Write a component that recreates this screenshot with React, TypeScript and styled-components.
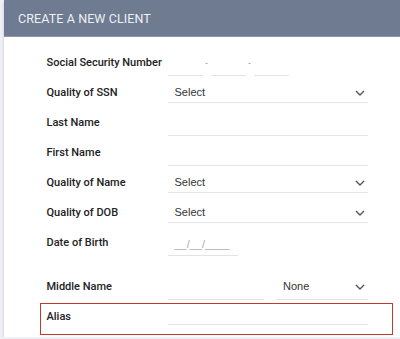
import React from 'react';
import styled, { createGlobalStyle } from 'styled-components';

const GlobalStyle = createGlobalStyle`
  html, body {
    margin: 0;
    padding: 0;
    background: #eef0f6;
    font-family: Roboto, "Liberation Sans", Arial, sans-serif;
    overflow: hidden;
  }
  * { box-sizing: border-box; }
`;

type Row = {
  label: string;
  kind: 'ssn' | 'select' | 'text' | 'date' | 'middle';
  value?: string;
};

const rows: Row[] = [
  { label: 'Social Security Number', kind: 'ssn' },
  { label: 'Quality of SSN', kind: 'select', value: 'Select' },
  { label: 'Last Name', kind: 'text' },
  { label: 'First Name', kind: 'text' },
  { label: 'Quality of Name', kind: 'select', value: 'Select' },
  { label: 'Quality of DOB', kind: 'select', value: 'Select' },
  { label: 'Date of Birth', kind: 'date' },
];

const Chevron = () => (
  <svg width="10" height="6" viewBox="0 0 10 6">
    <path d="M1 1 L5 5 L9 1" fill="none" stroke="#555" strokeWidth="1.4" />
  </svg>
);

const SelectBox = ({ value, width }: { value: string; width?: number }) => (
  <SelectField fixedWidth={width}>
    <span>{value}</span>
    <Chevron />
  </SelectField>
);

const renderField = (row: Row) => {
  switch (row.kind) {
    case 'ssn':
      return (
        <SsnGroup>
          <Line width={35} />
          <Dash>-</Dash>
          <Line width={35} />
          <Dash>-</Dash>
          <Line width={35} />
        </SsnGroup>
      );
    case 'select':
      return <SelectBox value={row.value || ''} />;
    case 'date':
      return <DateField>__/__/____</DateField>;
    case 'middle':
      return (
        <MiddleGroup>
          <Line width={96} />
          <SelectBox value="None" width={92} />
        </MiddleGroup>
      );
    default:
      return <TextField />;
  }
};

const App = () => {
  return (
    <>
      <GlobalStyle />
      <Card>
        <Header>CREATE A NEW CLIENT</Header>
        <Form>
          {rows.map((row) => (
            <FormRow key={row.label}>
              <Label>{row.label}</Label>
              {renderField(row)}
            </FormRow>
          ))}
          <Spacer />
          <FormRow>
            <Label>Middle Name</Label>
            {renderField({ label: 'Middle Name', kind: 'middle' })}
          </FormRow>
          <FormRow highlighted>
            <Label>Alias</Label>
            <AliasField />
          </FormRow>
        </Form>
      </Card>
    </>
  );
};

export default App;

const Card = styled.div`
  margin-left: 4px;
  height: 337px;
  background: #fff;
  box-shadow: 0 2px 3px rgba(0, 0, 0, 0.18);
`;

const Header = styled.div`
  height: 37px;
  background: #6f7b91;
  border-bottom: 1px solid #8e98aa;
  color: #eef0f4;
  font-size: 12.5px;
  letter-spacing: 0.1px;
  display: flex;
  align-items: center;
  padding-left: 14px;
`;

const Form = styled.div`
  padding: 10px 7px 0 36px;
  display: flex;
  flex-direction: column;
`;

const FormRow = styled.div<{ highlighted?: boolean }>`
  display: flex;
  align-items: center;
  height: 30px;
  padding: 0 24px 0 5.5px;
  border: 1.5px solid ${(p) => (p.highlighted ? '#c8372d' : 'transparent')};
  ${(p) =>
    p.highlighted ? 'height: 32px; margin-top: 2px; padding-bottom: 5px;' : ''}
`;

const Spacer = styled.div`
  height: 14px;
`;

const Label = styled.div`
  width: 121px;
  flex-shrink: 0;
  font-size: 11px;
  font-weight: 500;
  color: #222;
`;

const TextField = styled.div`
  flex: 1;
  height: 20px;
  margin-top: 8px;
  border-bottom: 1px solid #e4e4e4;
`;

const AliasField = styled(TextField)`
  height: 16px;
  margin-top: 0;
`;

const SsnGroup = styled.div`
  display: flex;
  align-items: flex-end;
  gap: 1px;
  height: 20px;
  margin-top: 8px;
`;

const Line = styled.div<{ width: number }>`
  flex: 0 0 ${(p) => p.width}px;
  height: 20px;
  border-bottom: 1px solid #e4e4e4;
`;

const Dash = styled.span`
  font-family: "Liberation Sans", Arial, sans-serif;
  font-size: 9px;
  color: #999;
  width: 6px;
  text-align: center;
  align-self: center;
  margin-top: -6px;
`;

const SelectField = styled.div<{ fixedWidth?: number }>`
  flex: ${(p) => (p.fixedWidth ? `0 0 ${p.fixedWidth}px` : '1')};
  height: 20px;
  margin-top: 2px;
  border-bottom: 1px solid #e4e4e4;
  display: flex;
  align-items: center;
  justify-content: space-between;
  padding: 0 3px 2px 7px;
  font-family: "Liberation Sans", Arial, sans-serif;
  font-size: 11px;
  color: #333;
  svg {
    margin-top: 3px;
  }
`;

const DateField = styled.div`
  width: 70px;
  height: 20px;
  margin-top: 8px;
  border-bottom: 1px solid #e4e4e4;
  padding-left: 7px;
  font-family: "Liberation Sans", Arial, sans-serif;
  font-size: 11px;
  color: #aaa;
  line-height: 16px;
`;

const MiddleGroup = styled.div`
  flex: 1;
  display: flex;
  align-items: flex-end;
  justify-content: space-between;
  margin-top: 8px;
  height: 20px;
  > div {
    margin-top: 0;
  }
  > div:last-child {
    height: 22px;
    padding-bottom: 6px;
  }
`;
